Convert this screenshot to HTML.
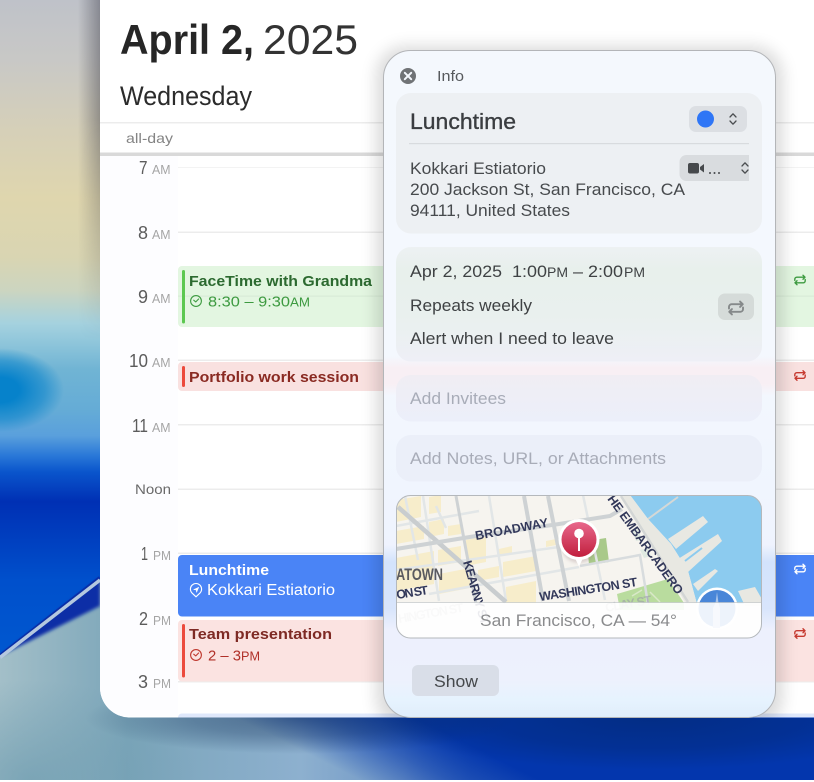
<!DOCTYPE html>
<html><head><meta charset="utf-8"><title>Calendar</title>
<style>html,body{margin:0;padding:0;width:814px;height:782px;overflow:hidden;background:#fff}svg{display:block}text{font-family:"Liberation Sans",sans-serif}</style>
</head><body>
<svg width="814" height="782" viewBox="0 0 814 782" xmlns="http://www.w3.org/2000/svg">
<defs>
<linearGradient id="lc" x1="0" y1="0" x2="0" y2="660" gradientUnits="userSpaceOnUse">
<stop offset="0" stop-color="#bfc2c9"/><stop offset=".09" stop-color="#c8c8c6"/><stop offset=".2" stop-color="#d6d0b8"/><stop offset=".3" stop-color="#dfd6ae"/><stop offset=".39" stop-color="#d9d5b2"/><stop offset=".44" stop-color="#ccd5c0"/><stop offset=".49" stop-color="#a5d2df"/><stop offset=".56" stop-color="#70b4d4"/><stop offset=".62" stop-color="#65acd6"/><stop offset=".66" stop-color="#5aa0dc"/><stop offset=".69" stop-color="#2a78d8"/><stop offset=".715" stop-color="#0a55cc"/><stop offset=".76" stop-color="#0030b4"/><stop offset=".82" stop-color="#0040c0"/><stop offset=".88" stop-color="#0050cc"/><stop offset="1" stop-color="#0058d0"/>
</linearGradient>
<radialGradient id="wedge" cx="0" cy="390" r="1" gradientUnits="userSpaceOnUse" gradientTransform="translate(0 390) scale(64 42) translate(0 -390)">
<stop offset="0" stop-color="#0682cb"/><stop offset=".3" stop-color="#0682cb"/><stop offset=".7" stop-color="#0682cb" stop-opacity=".55"/><stop offset="1" stop-color="#0682cb" stop-opacity="0"/>
</radialGradient>
<radialGradient id="shade" cx="300" cy="718" r="1" gradientUnits="userSpaceOnUse" gradientTransform="translate(300 718) scale(215 36) translate(-300 -718)">
<stop offset="0" stop-color="#0d2a55" stop-opacity=".5"/><stop offset=".5" stop-color="#0d2a55" stop-opacity=".32"/><stop offset="1" stop-color="#0d2a55" stop-opacity="0"/>
</radialGradient>
<radialGradient id="dkr" cx="650" cy="718" r="1" gradientUnits="userSpaceOnUse" gradientTransform="translate(650 718) scale(270 52) translate(-650 -718)">
<stop offset="0" stop-color="#032a78" stop-opacity=".75"/><stop offset=".6" stop-color="#032a78" stop-opacity=".45"/><stop offset="1" stop-color="#032a78" stop-opacity="0"/>
</radialGradient>
<linearGradient id="lite" x1="0" y1="0" x2="470" y2="0" gradientUnits="userSpaceOnUse">
<stop offset="0" stop-color="#a3bfc8"/><stop offset=".27" stop-color="#7ba5b9"/><stop offset=".64" stop-color="#8db0cf"/><stop offset=".86" stop-color="#6f96c6"/><stop offset="1" stop-color="#4a78c0"/>
</linearGradient>
<linearGradient id="diag" x1="362" y1="781" x2="398" y2="709" gradientUnits="userSpaceOnUse">
<stop offset="0" stop-color="#0336ad" stop-opacity="0"/><stop offset=".5" stop-color="#0336ad" stop-opacity=".55"/><stop offset="1" stop-color="#0336ad"/>
</linearGradient>
<radialGradient id="lfade" cx="30" cy="780" r="1" gradientUnits="userSpaceOnUse" gradientTransform="translate(30 780) scale(170 100) translate(-30 -780)">
<stop offset="0" stop-color="#6e9cb0" stop-opacity=".7"/><stop offset="1" stop-color="#6e9cb0" stop-opacity="0"/>
</radialGradient>
<linearGradient id="edge" x1="78" y1="0" x2="100" y2="0" gradientUnits="userSpaceOnUse">
<stop offset="0" stop-color="#2a2a38" stop-opacity="0"/><stop offset="1" stop-color="#2a2a38" stop-opacity=".38"/>
</linearGradient>
<linearGradient id="vfade" x1="0" y1="120" x2="0" y2="340" gradientUnits="userSpaceOnUse">
<stop offset="0" stop-color="#fff"/><stop offset="1" stop-color="#000"/>
</linearGradient>
<mask id="edgem" maskUnits="userSpaceOnUse" x="70" y="0" width="40" height="400"><rect x="70" y="0" width="40" height="400" fill="url(#vfade)"/></mask>
<linearGradient id="pop" x1="0" y1="50" x2="0" y2="717" gradientUnits="userSpaceOnUse">
<stop offset="0" stop-color="#f4f8fd"/><stop offset=".45" stop-color="#f4f8fe"/><stop offset=".66" stop-color="#f0f5fe"/><stop offset=".88" stop-color="#edf0fd"/><stop offset=".945" stop-color="#edf1fd"/><stop offset=".975" stop-color="#e6f3fe"/><stop offset="1" stop-color="#e0edfb"/>
</linearGradient>
<linearGradient id="c2" x1="0" y1="247" x2="0" y2="361" gradientUnits="userSpaceOnUse">
<stop offset="0" stop-color="#edf1f3"/><stop offset=".2" stop-color="#e8f0ec"/><stop offset=".6" stop-color="#e9f0ee"/><stop offset="1" stop-color="#eeeff6"/>
</linearGradient>
<linearGradient id="c3" x1="0" y1="375" x2="0" y2="421" gradientUnits="userSpaceOnUse">
<stop offset="0" stop-color="#f0edf3"/><stop offset=".4" stop-color="#eeeef6"/><stop offset="1" stop-color="#eceffa"/>
</linearGradient>
<linearGradient id="blu" x1="0" y1="545" x2="0" y2="630" gradientUnits="userSpaceOnUse">
<stop offset="0" stop-color="#d3e3fc" stop-opacity="0"/><stop offset=".2" stop-color="#d3e3fc"/><stop offset=".75" stop-color="#d8e5fc"/><stop offset="1" stop-color="#d8e5fc" stop-opacity="0"/>
</linearGradient>
<linearGradient id="pnk" x1="0" y1="356" x2="0" y2="396" gradientUnits="userSpaceOnUse">
<stop offset="0" stop-color="#f8eff4" stop-opacity="0"/><stop offset=".3" stop-color="#f8eff4"/><stop offset=".7" stop-color="#f8eff4"/><stop offset="1" stop-color="#f8eff4" stop-opacity="0"/>
</linearGradient>
<linearGradient id="pin" x1="0" y1="0" x2="0" y2="1"><stop offset="0" stop-color="#e8688c"/><stop offset="1" stop-color="#c11f3d"/></linearGradient>
<filter id="b8" filterUnits="userSpaceOnUse" x="-150" y="-150" width="1150" height="1100"><feGaussianBlur stdDeviation="8"/></filter>
<filter id="b2" filterUnits="userSpaceOnUse" x="-150" y="-150" width="1150" height="1100"><feGaussianBlur stdDeviation="1.5"/></filter>
<filter id="b05" filterUnits="userSpaceOnUse" x="380" y="480" width="400" height="180"><feGaussianBlur stdDeviation=".35"/></filter>
<clipPath id="win"><path d="M100 0H814V717.500H130A30 30 0 0 1 100 687.500Z"/></clipPath>
<clipPath id="popc"><rect x="383.500" y="50.500" width="392" height="667" rx="27"/></clipPath>
<clipPath id="mapc"><rect x="396.500" y="495.500" width="365" height="142.500" rx="14"/></clipPath>
<clipPath id="vid"><rect x="640" y="150" width="109" height="40"/></clipPath>
<g id="rep" fill="none" stroke-width="1.400" stroke-linecap="round" stroke-linejoin="round"><path d="M-5.200 .4V-.8A2 2 0 0 1 -3.200 -2.800H5M3 -4.800L5 -2.800L3 -.8"/><path d="M5.200 -.4V.8A2 2 0 0 1 3.200 2.800H-5M-3 4.800L-5 2.800L-3 .8"/></g>
<g id="clk" fill="none" stroke-width="1.100" stroke-linecap="round" stroke-linejoin="round"><circle r="5.400"/><path d="M-2.300 -.8L-.2 .9L2.600 -2"/></g>
</defs>

<!-- wallpaper -->
<rect width="814" height="780" fill="#0336ad"/>
<rect x="0" y="560" width="814" height="220" fill="url(#lite)"/>
<rect x="100" y="560" width="714" height="220" fill="url(#diag)"/>
<rect x="380" y="718" width="434" height="52" fill="url(#dkr)"/>
<rect x="0" y="680" width="200" height="100" fill="url(#lfade)"/>
<ellipse cx="300" cy="718" rx="215" ry="36" fill="url(#shade)"/>
<path d="M0 0H110V573L0 658Z" fill="url(#lc)"/>
<ellipse cx="0" cy="390" rx="64" ry="42" fill="url(#wedge)"/>
<path d="M0 656L100 578V606Z" fill="#0a2ea6" filter="url(#b2)"/>
<path d="M0 656L100 578" stroke="#0a2ea6" stroke-width="4"/>
<path d="M0 657.500L100 580" stroke="#b5c8df" stroke-width="3.500" fill="none"/>
<rect x="78" y="0" width="22" height="400" fill="url(#edge)" mask="url(#edgem)"/>

<!-- window -->
<g clip-path="url(#win)">
<rect x="100" y="0" width="714" height="720" fill="#fff"/>
<rect x="100" y="156" width="78" height="560" fill="#fdfdff"/>
<text x="120" y="54" font-size="42" font-weight="700" fill="#262626" textLength="134" lengthAdjust="spacingAndGlyphs">April 2,</text>
<text x="263" y="54" font-size="42" fill="#333" textLength="95" lengthAdjust="spacingAndGlyphs">2025</text>
<text x="120" y="105" font-size="26.500" fill="#2b2b2b" textLength="132" lengthAdjust="spacingAndGlyphs">Wednesday</text>
<rect x="100" y="122" width="714" height="1.500" fill="#ececec"/>
<text x="126" y="143" font-size="14" fill="#848484" textLength="47" lengthAdjust="spacingAndGlyphs">all-day</text>
<rect x="100" y="152.500" width="714" height="3.500" fill="#d9d9d9"/>

<g fill="#ececec">
<rect x="178" y="167" width="636" height="1" fill="#f3f3f3"/>
<rect x="178" y="231.500" width="636" height="1.500"/>
<rect x="178" y="295.500" width="636" height="1.500"/>
<rect x="178" y="359.500" width="636" height="1.500"/>
<rect x="178" y="424" width="636" height="1.500"/>
<rect x="178" y="488.500" width="636" height="1.500"/>
<rect x="178" y="552.500" width="636" height="1.500"/>
<rect x="178" y="681" width="636" height="1.500"/>
</g>

<g fill="#5c5c5c" font-size="18">
<text x="139" y="174" textLength="8.500" lengthAdjust="spacingAndGlyphs">7</text>
<text x="138" y="239" textLength="10" lengthAdjust="spacingAndGlyphs">8</text>
<text x="138" y="303" textLength="10" lengthAdjust="spacingAndGlyphs">9</text>
<text x="129" y="367" textLength="19" lengthAdjust="spacingAndGlyphs">10</text>
<text x="132" y="432" textLength="16" lengthAdjust="spacingAndGlyphs">11</text>
<text x="141" y="560" textLength="7" lengthAdjust="spacingAndGlyphs">1</text>
<text x="139" y="625" textLength="9" lengthAdjust="spacingAndGlyphs">2</text>
<text x="138" y="688" textLength="10" lengthAdjust="spacingAndGlyphs">3</text>
</g>
<text x="135" y="494" font-size="14" fill="#6a6a6a" textLength="36" lengthAdjust="spacingAndGlyphs">Noon</text>
<g fill="#a5a5a5" font-size="12.500">
<text x="152" y="174" textLength="18.500" lengthAdjust="spacingAndGlyphs">AM</text>
<text x="152" y="239" textLength="18.500" lengthAdjust="spacingAndGlyphs">AM</text>
<text x="152" y="303" textLength="18.500" lengthAdjust="spacingAndGlyphs">AM</text>
<text x="152" y="367" textLength="18.500" lengthAdjust="spacingAndGlyphs">AM</text>
<text x="152" y="432" textLength="18.500" lengthAdjust="spacingAndGlyphs">AM</text>
<text x="153" y="560" textLength="18" lengthAdjust="spacingAndGlyphs">PM</text>
<text x="153" y="625" textLength="18" lengthAdjust="spacingAndGlyphs">PM</text>
<text x="153" y="688" textLength="18" lengthAdjust="spacingAndGlyphs">PM</text>
</g>

<!-- FaceTime -->
<rect x="178" y="266" width="660" height="61" rx="4" fill="#e3f6e1"/>
<rect x="178" y="295.500" width="636" height="1.200" fill="#d8ecd6"/>
<rect x="182" y="270" width="3" height="53.500" rx="1.500" fill="#5cc850"/>
<text x="189" y="286" font-size="15" font-weight="700" fill="#2c6a30" textLength="183" lengthAdjust="spacingAndGlyphs">FaceTime with Grandma</text>
<use href="#clk" x="196" y="301" stroke="#3f9c42"/>
<text x="208" y="306.500" font-size="15" fill="#3d9a40" textLength="82" lengthAdjust="spacingAndGlyphs">8:30 – 9:30</text>
<text x="290" y="306.500" font-size="12.500" fill="#3d9a40" textLength="20" lengthAdjust="spacingAndGlyphs">AM</text>
<use href="#rep" x="800" y="280" stroke="#3f9c42"/>

<!-- Portfolio -->
<rect x="178" y="362" width="660" height="29" rx="4" fill="#f9e1e0"/>
<rect x="182" y="366" width="3" height="21" rx="1.500" fill="#ec4a3c"/>
<text x="189" y="382" font-size="15" font-weight="700" fill="#8a2a22" textLength="170" lengthAdjust="spacingAndGlyphs">Portfolio work session</text>
<use href="#rep" x="800" y="375.500" stroke="#c63a30"/>

<!-- Lunchtime -->
<rect x="178" y="555" width="660" height="61.500" rx="4" fill="#4a84f6"/>
<text x="189" y="575" font-size="15" font-weight="700" fill="#fff" textLength="80" lengthAdjust="spacingAndGlyphs">Lunchtime</text>
<g transform="translate(196 590)" fill="none" stroke="#fff" stroke-width="1.100" stroke-linejoin="round"><path d="M0 6.800L-4.200 2.800A5.600 5.600 0 1 1 4.200 2.800Z"/><path d="M-2.400 -.4L2.800 -2.800L.6 2.400L.1 -.1Z" fill="#fff" stroke-width=".5"/></g>
<text x="207" y="595" font-size="15.500" fill="#fff" textLength="128" lengthAdjust="spacingAndGlyphs">Kokkari Estiatorio</text>
<use href="#rep" x="800" y="569" stroke="#fff"/>

<!-- Team -->
<rect x="178" y="620" width="660" height="61.500" rx="4" fill="#fbe3e1"/>
<rect x="182" y="624" width="3" height="53.500" rx="1.500" fill="#ec4a3c"/>
<text x="189" y="639" font-size="15" font-weight="700" fill="#7e2a24" textLength="143" lengthAdjust="spacingAndGlyphs">Team presentation</text>
<use href="#clk" x="196" y="655" stroke="#bf3a30"/>
<text x="208" y="660.500" font-size="15" fill="#b03028" textLength="33" lengthAdjust="spacingAndGlyphs">2 – 3</text>
<text x="241" y="660.500" font-size="12.500" fill="#b03028" textLength="19" lengthAdjust="spacingAndGlyphs">PM</text>
<use href="#rep" x="800" y="633.500" stroke="#c63a30"/>

<!-- next -->
<rect x="178" y="713.500" width="660" height="20" rx="4" fill="#dfe8fb"/>

<!-- popup shadow (clipped to window) -->
<rect x="376" y="46" width="407" height="682" rx="30" fill="#000" opacity=".14" filter="url(#b8)"/>
</g>

<!-- popup -->
<g clip-path="url(#popc)">
<rect x="383" y="50" width="393" height="668" fill="url(#pop)"/>
<rect x="383" y="356" width="393" height="40" fill="url(#pnk)"/>
<rect x="383" y="545" width="393" height="85" fill="url(#blu)"/>
<circle cx="408" cy="76" r="8" fill="#707376"/>
<path d="M404.800 72.800L411.200 79.200M411.200 72.800L404.800 79.200" stroke="#f4f8fd" stroke-width="2" stroke-linecap="round"/>
<text x="437" y="81" font-size="14.500" fill="#575a5d" textLength="27" lengthAdjust="spacingAndGlyphs">Info</text>

<!-- card 1 -->
<rect x="396" y="93" width="366" height="140.500" rx="15" fill="#edf0f3"/>
<text x="410" y="129" font-size="22" fill="#3a3d40" stroke="#3a3d40" stroke-width=".35" textLength="106" lengthAdjust="spacingAndGlyphs">Lunchtime</text>
<rect x="409" y="143" width="340" height="1.200" fill="#d8dbde"/>
<rect x="689" y="106" width="58" height="26" rx="7" fill="#dcdfe3"/>
<circle cx="705.500" cy="119" r="8.500" fill="#2f76f6"/>
<path d="M730 117L733 113.800L736 117M730 121L733 124.200L736 121" fill="none" stroke="#4a4d50" stroke-width="1.300" stroke-linecap="round" stroke-linejoin="round"/>
<g clip-path="url(#vid)">
<rect x="679.500" y="155" width="90" height="26" rx="7" fill="#d9dcdf"/>
<rect x="688" y="163" width="11" height="10.500" rx="2" fill="#46494c"/>
<path d="M700 167L704 164V172.500L700 169.500Z" fill="#46494c"/>
<circle cx="710" cy="173" r="1" fill="#46494c"/><circle cx="714.500" cy="173" r="1" fill="#46494c"/><circle cx="719" cy="173" r="1" fill="#46494c"/>
<path d="M742 166L745 162.800L748 166M742 170L745 173.200L748 170" fill="none" stroke="#4a4d50" stroke-width="1.300" stroke-linecap="round" stroke-linejoin="round"/>
</g>
<g font-size="17" fill="#474a4d">
<text x="410" y="174" textLength="136" lengthAdjust="spacingAndGlyphs">Kokkari Estiatorio</text>
<text x="410" y="195" textLength="275" lengthAdjust="spacingAndGlyphs">200 Jackson St, San Francisco, CA</text>
<text x="410" y="216" textLength="160" lengthAdjust="spacingAndGlyphs">94111, United States</text>
</g>

<!-- card 2 -->
<rect x="396" y="247" width="366" height="114.500" rx="15" fill="url(#c2)"/>
<g font-size="17" fill="#3f4244">
<text x="410" y="277" textLength="92" lengthAdjust="spacingAndGlyphs">Apr 2, 2025</text>
<text x="512" y="277" textLength="35" lengthAdjust="spacingAndGlyphs">1:00</text>
<text x="547" y="277" font-size="14" textLength="21" lengthAdjust="spacingAndGlyphs">PM</text>
<text x="573" y="277" textLength="50" lengthAdjust="spacingAndGlyphs">– 2:00</text>
<text x="624" y="277" font-size="14" textLength="21" lengthAdjust="spacingAndGlyphs">PM</text>
<text x="410" y="311" textLength="122" lengthAdjust="spacingAndGlyphs">Repeats weekly</text>
<text x="410" y="344" textLength="204" lengthAdjust="spacingAndGlyphs">Alert when I need to leave</text>
</g>
<rect x="718" y="293.500" width="36" height="26.500" rx="7" fill="#d5dbd9"/>
<use href="#rep" x="736" y="308" stroke="#85898a" transform="translate(736 308) scale(1.350) translate(-736 -308)"/>

<!-- card 3,4 -->
<rect x="396" y="375" width="366" height="46.500" rx="15" fill="url(#c3)"/>
<text x="410" y="404" font-size="17" fill="#a8acb8" textLength="96" lengthAdjust="spacingAndGlyphs">Add Invitees</text>
<rect x="396" y="435" width="366" height="46.500" rx="15" fill="#ebeff9"/>
<text x="410" y="464" font-size="17" fill="#a8acb8" textLength="256" lengthAdjust="spacingAndGlyphs">Add Notes, URL, or Attachments</text>

<!-- map -->
<g clip-path="url(#mapc)">
<g filter="url(#b05)">
<rect x="396" y="495" width="366" height="143" fill="#f6f4ef"/>
<g fill="#f7edcb">
<path d="M396 500L421 496V517L396 522Z"/><path d="M429 497L441 495V512L429 514Z"/>
<path d="M396 531L424 526V539L396 544Z"/><path d="M429 522L444 519V534L429 537Z"/><path d="M448 526L461 524V534L448 536Z"/>
<path d="M396 558L434 551V584L396 591Z"/><path d="M438 550L461 546V562L438 566Z"/><path d="M439 574L470 568V588L439 594Z"/>
<path d="M466 540L486 536V562L466 566Z"/><path d="M478 570L499 566V577L478 581Z"/>
<path d="M503 562L536 556V571L503 577Z"/><path d="M506 587L536 581V604H506Z"/>
<path d="M499 549L512 546V553L499 556Z"/><path d="M546 541L556 539V545L546 547Z"/>
</g>
<path d="M630 495L648 519L671 544L688 571L697 604H762V495Z" fill="#8ccbef"/>
<g fill="#e8e8e2">
<path d="M668 539L703 516L708 522L676 549Z"/><path d="M678 559L718 534L722 541L688 572Z"/><path d="M693 584L715 569L718 571L698 591Z"/><path d="M738 591L755 587L763 601V606H745Z"/>
<path d="M622 495H630L648 519L671 544L688 571L697 604H686Z"/>
</g>
<path d="M648 519L678 497" stroke="#d5d8d6" stroke-width="2" fill="none"/>
<path d="M685 561L702 548" stroke="#8ccbef" stroke-width="2" fill="none"/>
<path d="M587 541L606 538L609 562L589 565Z" fill="#a9c98a"/>
<path d="M617 594L668 579L684 603V610H620Z" fill="#b9dc9e"/>
<path d="M632 596L642 590M650 592L660 602" stroke="#d9e8c8" stroke-width="1.500" fill="none"/>
<path d="M632 530L638 529L642 540L636 541ZM640 550L648 548L651 556L644 558Z" fill="#e0eae2"/>
<g stroke="#e2e6e7" stroke-width="2.500" fill="none">
<path d="M396 526L479 511M396 570L559 547M429 594L579 567M423 496L439 601M489 496L506 601M405 496L418 560M436 506L446 528M583 495L605 600"/>
<path d="M580 566L640 555L648 604" stroke="#d8dcde"/>
</g>
<g fill="none" stroke="#ced2d4" stroke-width="4">
<path d="M398 507L506 602" stroke-width="4.500" stroke="#c9cdcf"/>
<path d="M396 549L476 536L559 524L610 516L622 509"/>
<path d="M524 496L543 601"/>
<path d="M548 496L569 601"/>
<path d="M456 496L476 604" stroke-width="3"/>
<path d="M621 496L688 602" stroke-width="2.500" stroke="#d3d6d5"/>
</g>
<g font-weight="700" fill="#33395a" font-size="12.500">
<text transform="translate(476 540) rotate(-10.500)" textLength="74" lengthAdjust="spacing">BROADWAY</text>
<text transform="translate(540 601) rotate(-8.700)" textLength="99" lengthAdjust="spacing">WASHINGTON ST</text>
<text transform="translate(397 599) rotate(-9)" textLength="32" lengthAdjust="spacing">ON ST</text>
<text transform="translate(463 562) rotate(74)" textLength="66" lengthAdjust="spacing">KEARNY ST</text>
<text transform="translate(607 499) rotate(54)" textLength="119" lengthAdjust="spacing">HE EMBARCADERO</text>
</g>
<g font-weight="700" fill="#9a9ca8" font-size="12.500" opacity=".6">
<text transform="translate(399 623) rotate(-10)" textLength="66" lengthAdjust="spacing">HINGTON ST</text>
<text transform="translate(606 612) rotate(-10)" textLength="47" lengthAdjust="spacing">CLAY ST</text>
</g>
<text x="396" y="580" font-size="17" font-weight="700" fill="#5a5a5e" textLength="47" lengthAdjust="spacingAndGlyphs">ATOWN</text>
<circle cx="579" cy="545" r="18" fill="#8a6a70" opacity=".25" filter="url(#b2)"/>
<path d="M574 556L579 566.500L584 556Z" fill="#fff"/>
<circle cx="579" cy="539.500" r="20.500" fill="#fff"/>
<circle cx="579" cy="539.500" r="17.500" fill="url(#pin)"/>
<circle cx="579" cy="533.500" r="4.800" fill="#fff"/>
<rect x="578" y="535" width="2" height="16" fill="#fff"/>
<circle cx="717" cy="608.500" r="21" fill="#fff"/>
<circle cx="717" cy="608.500" r="18.500" fill="#4a86d8"/>
<path d="M715.500 603L717 592L718.500 603L720 608V628H713V608Z" fill="#a9c4ea"/>
</g>
<rect x="396" y="602.500" width="366" height="36" fill="#fff" opacity=".9"/>
<rect x="396" y="602" width="366" height="1" fill="#b8bcc0" opacity=".6"/>
<text x="480" y="626" font-size="17" fill="#8a8b8d" textLength="197" lengthAdjust="spacingAndGlyphs">San Francisco, CA — 54°</text>
</g>
<rect x="396.500" y="495.500" width="365" height="142.500" rx="14" fill="none" stroke="#b4b8bc" stroke-width="1"/>

<rect x="412" y="665" width="87" height="31" rx="6" fill="#d9dee8"/>
<text x="434" y="687" font-size="17" fill="#45484b" textLength="44" lengthAdjust="spacingAndGlyphs">Show</text>
</g>
<rect x="383.500" y="50.500" width="392" height="667" rx="27" fill="none" stroke="#b3b5b8" stroke-width="1"/>
<rect x="0" y="780" width="814" height="2" fill="#fff"/>
</svg>
</body></html>
